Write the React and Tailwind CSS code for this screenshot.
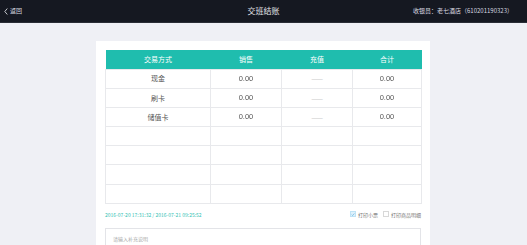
const ROWS = [
  { name: '现金', sale: '0.00', total: '0.00' },
  { name: '刷卡', sale: '0.00', total: '0.00' },
  { name: '储值卡', sale: '0.00', total: '0.00' },
  null,
  null,
  null,
  null,
]

const FONT = { fontFamily: '"Noto Sans CJK SC", "Noto Sans", sans-serif' }
const NUM = { fontFamily: '"Liberation Sans", sans-serif' }

function Num({ v }) {
  return (
    <span className="inline-block grayscale text-[7.5px] text-[#555]" style={NUM}>{v}</span>
  )
}

export default function App() {
  return (
    <div className="w-[527px] h-[245px] overflow-hidden bg-[#eff0f5]" style={FONT}>
      {/* top bar */}
      <div className="h-[23px] bg-[#151821] grid grid-cols-[1fr_auto_1fr] items-center text-[#d8dae0] border-b border-[#2a2d36]">
        <div className="flex items-center pl-[4px] text-[6px] leading-none">
          <svg width="4" height="7" viewBox="0 0 4 7" className="mr-[2px]">
            <path d="M3.3 0.5 L0.8 3.5 L3.3 6.5" fill="none" stroke="#d8dae0" strokeWidth="0.9" />
          </svg>
          返回
        </div>
        <div className="text-[8px] leading-none text-[#e4e6ea]">交班结账</div>
        <div className="text-right pr-[14px] text-[6px] leading-none">收银员：老七酒店（610201190323）</div>
      </div>

      <div className="pt-[18px] pl-[96px]">
        <div className="w-[334px] h-[300px] bg-white px-[9px] pt-[9px]">
          <table className="w-[316px] border-collapse table-fixed text-[7px] text-[#555]">
            <colgroup>
              <col className="w-[105px]" />
              <col className="w-[71px]" />
              <col className="w-[71px]" />
              <col className="w-[69px]" />
            </colgroup>
            <thead>
              <tr className="h-[19px] bg-[#1fbdae] text-white">
                <th className="font-normal">交易方式</th>
                <th className="font-normal">销售</th>
                <th className="font-normal">充值</th>
                <th className="font-normal">合计</th>
              </tr>
            </thead>
            <tbody>
              {ROWS.map((r, i) => (
                <tr key={i} className="h-[19.2px]">
                  <td className="border border-[#e8e9ec] text-center">{r ? r.name : ''}</td>
                  <td className="border border-[#e8e9ec] text-center">{r ? <Num v={r.sale} /> : ''}</td>
                  <td className="border border-[#e8e9ec] text-center text-[#ccc]">{r ? '——' : ''}</td>
                  <td className="border border-[#e8e9ec] text-center">{r ? <Num v={r.total} /> : ''}</td>
                </tr>
              ))}
            </tbody>
          </table>

          <div className="flex items-center justify-between mt-[7px] h-[7px]">
            <span className="text-[5px] leading-none text-[#33c2b4]">2016-07-20 17:31:32 / 2016-07-21 09:25:52</span>
            <div className="flex items-center text-[5px] leading-none text-[#777]">
              <span className="w-[6px] h-[6px] border border-[#bfe3f5] bg-[#dff1fb] flex items-center justify-center mr-[2px]">
                <svg width="5" height="5" viewBox="0 0 5 5">
                  <path d="M0.8 2.6 L2 3.8 L4.2 1.2" fill="none" stroke="#5aaee0" strokeWidth="0.8" />
                </svg>
              </span>
              <span>打印小票</span>
              <span className="w-[6px] h-[6px] border border-[#d8d8d8] bg-white ml-[5px] mr-[2px]"></span>
              <span>打印商品明细</span>
            </div>
          </div>

          <div className="mt-[10px] h-[30px] border border-[#e3e4e8] px-[7px] pt-[6px] text-[5px] text-[#aaa]">
            请输入补充说明
          </div>
        </div>
      </div>
    </div>
  )
}
